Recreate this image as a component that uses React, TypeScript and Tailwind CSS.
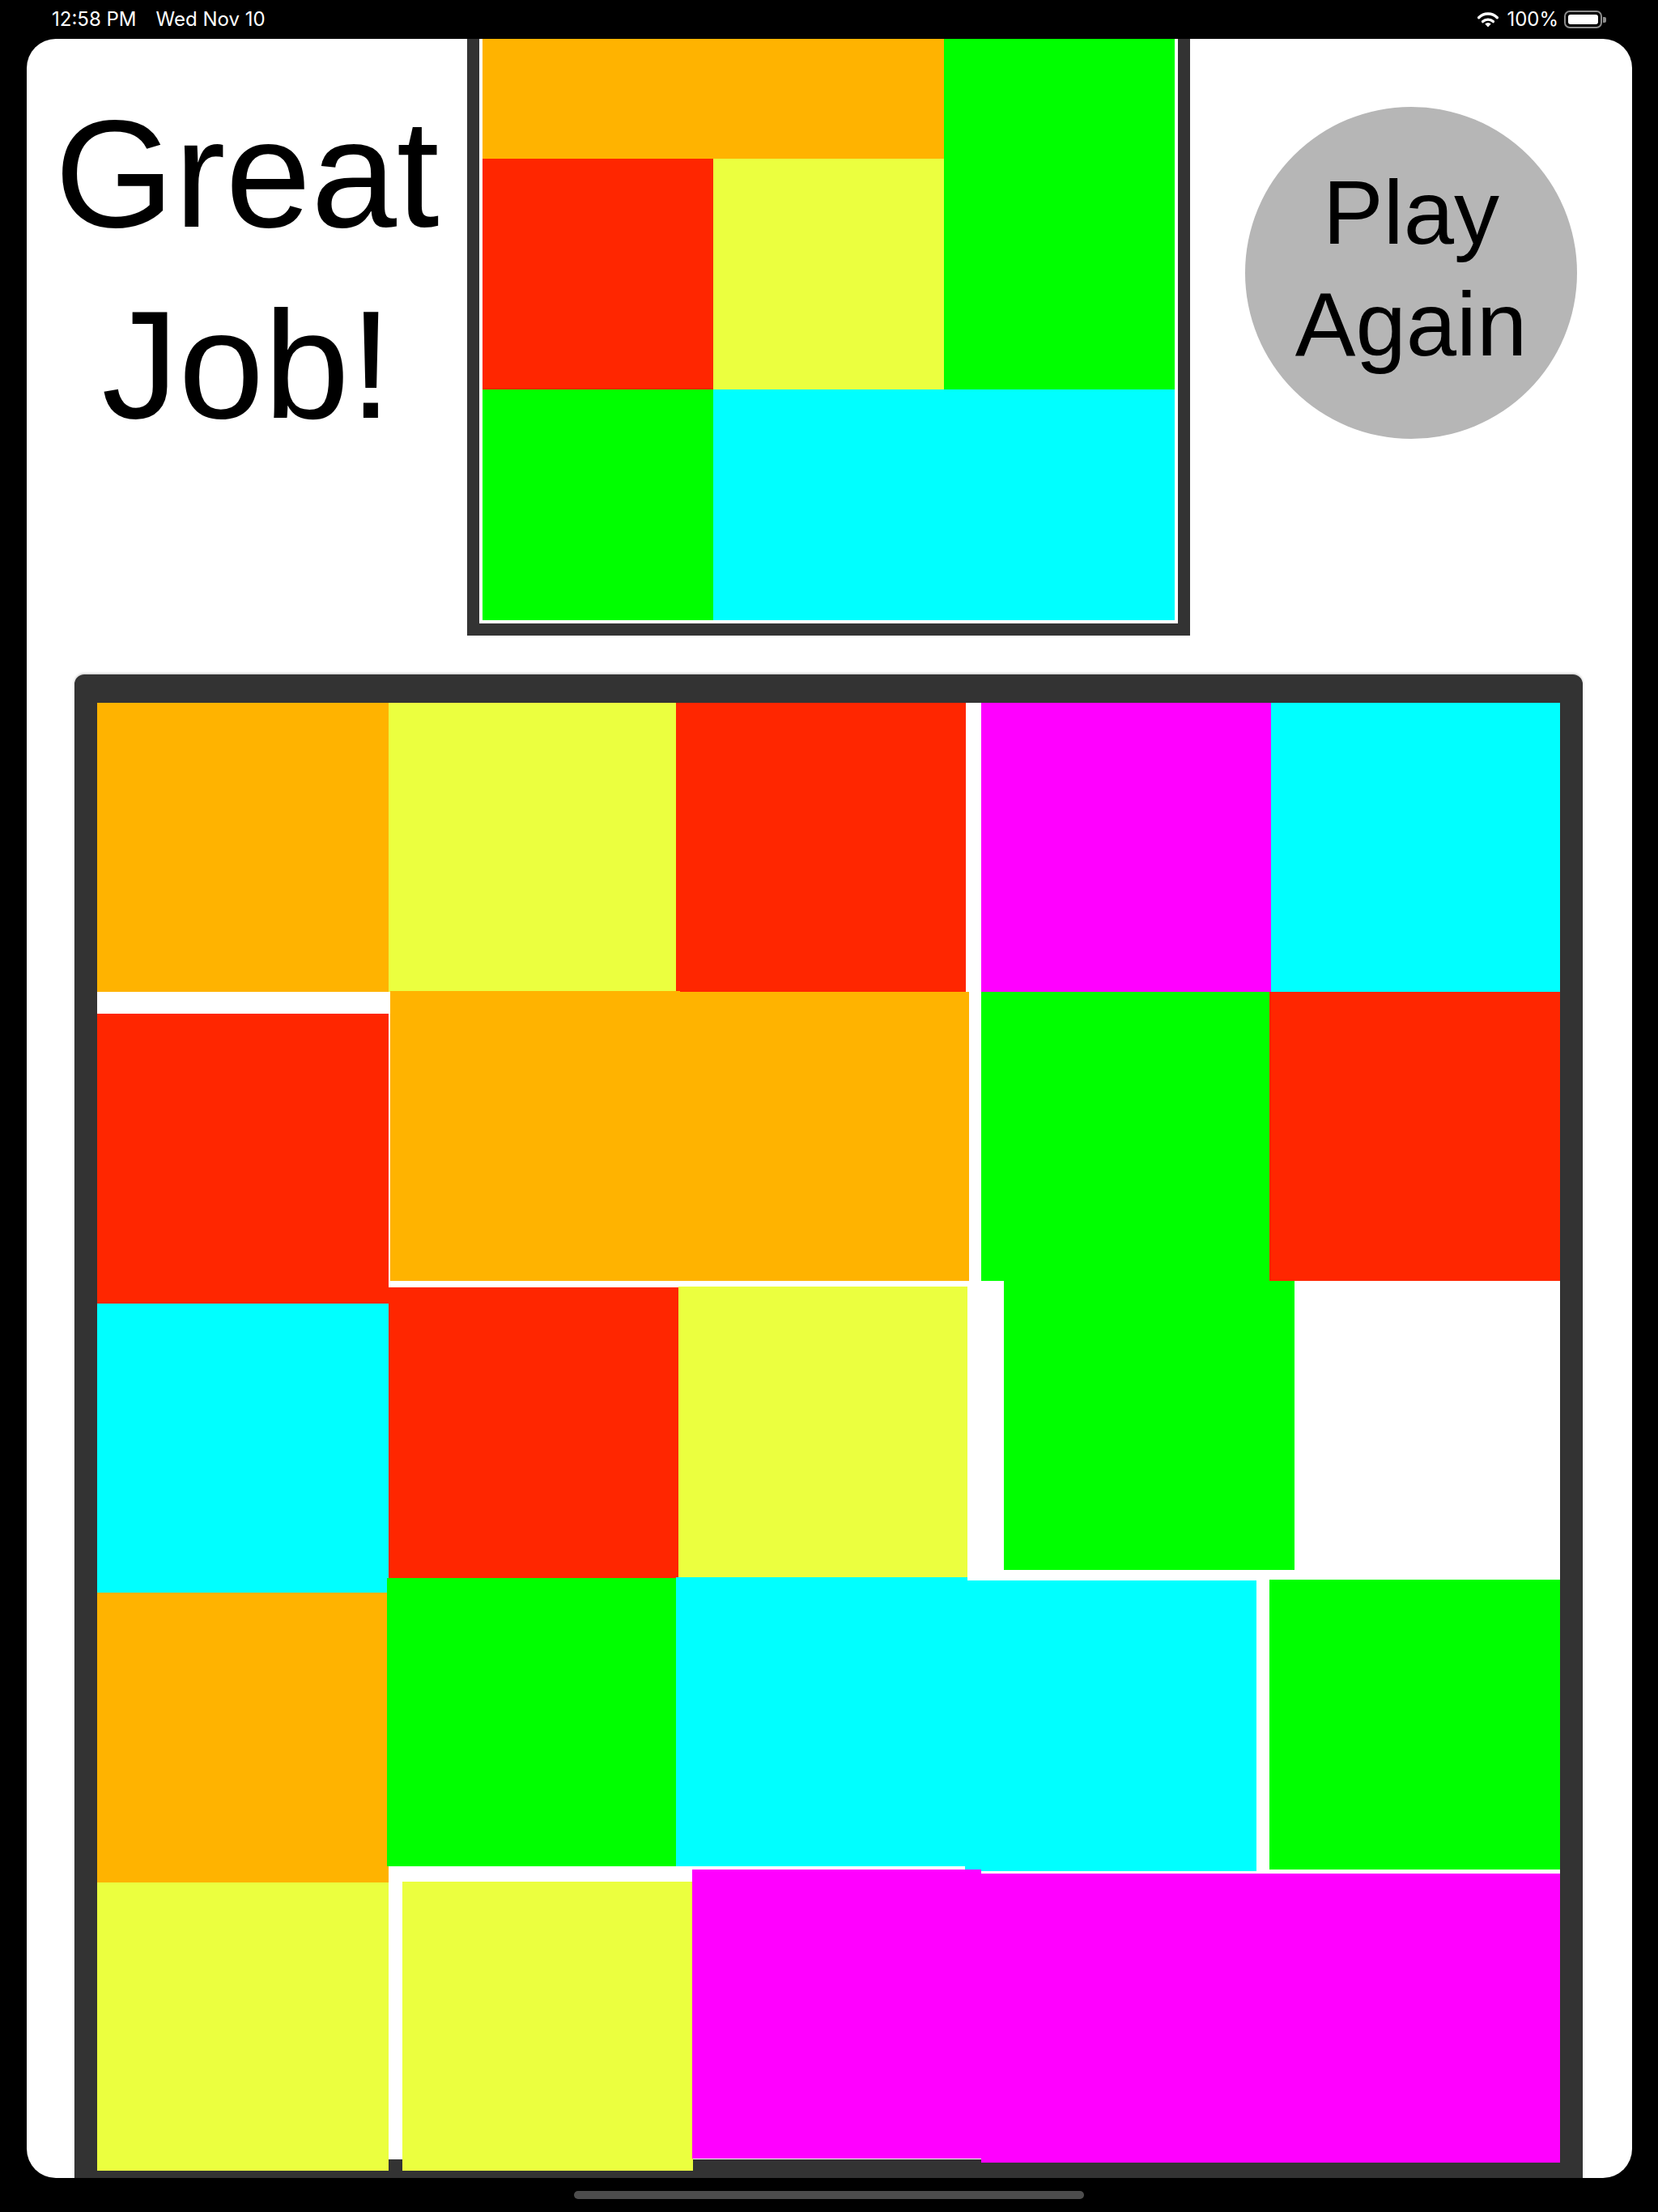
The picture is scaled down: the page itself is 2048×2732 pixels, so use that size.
import React from 'react'

const ORANGE = 'bg-[#ffb300]'
const YELLOW = 'bg-[#ebff3f]'
const RED = 'bg-[#ff2600]'
const GREEN = 'bg-[#00ff00]'
const CYAN = 'bg-[#00ffff]'
const MAGENTA = 'bg-[#ff00ff]'

// target pattern shown in the small board
const goal = [
  [ORANGE, ORANGE, GREEN],
  [RED, YELLOW, GREEN],
  [GREEN, CYAN, CYAN],
]

// tiles on the play board, where they currently sit (px inside the board)
const tiles: { c: string; x: number; y: number; w: number; h: number }[] = [
  { c: ORANGE, x: 0, y: 0, w: 360, h: 357 },
  { c: YELLOW, x: 360, y: 0, w: 356, h: 357 },
  { c: RED, x: 715, y: 0, w: 358, h: 357 },
  { c: MAGENTA, x: 1092, y: 0, w: 358, h: 357 },
  { c: CYAN, x: 1450, y: 0, w: 357, h: 357 },

  { c: RED, x: 0, y: 384, w: 360, h: 358 },
  { c: ORANGE, x: 362, y: 356, w: 358, h: 358 },
  { c: ORANGE, x: 717, y: 357, w: 360, h: 357 },
  { c: GREEN, x: 1092, y: 357, w: 356, h: 357 },
  { c: RED, x: 1448, y: 357, w: 359, h: 357 },

  { c: CYAN, x: 0, y: 742, w: 360, h: 357 },
  { c: RED, x: 360, y: 722, w: 358, h: 359 },
  { c: YELLOW, x: 718, y: 721, w: 357, h: 359 },
  { c: GREEN, x: 1120, y: 714, w: 359, h: 357 },

  { c: ORANGE, x: 0, y: 1099, w: 360, h: 358 },
  { c: GREEN, x: 358, y: 1081, w: 357, h: 356 },
  { c: CYAN, x: 715, y: 1080, w: 360, h: 357 },
  { c: CYAN, x: 1072, y: 1084, w: 360, h: 359 },
  { c: GREEN, x: 1448, y: 1083, w: 359, h: 358 },

  { c: YELLOW, x: 0, y: 1457, w: 360, h: 356 },
  { c: YELLOW, x: 377, y: 1456, w: 359, h: 357 },
  { c: MAGENTA, x: 735, y: 1441, w: 357, h: 357 },
  { c: MAGENTA, x: 1092, y: 1446, w: 358, h: 357 },
  { c: MAGENTA, x: 1450, y: 1446, w: 357, h: 357 },
]

function StatusBar() {
  return (
    <div className="h-[48px] flex items-center justify-between pl-[64px] pr-[64px] text-white font-['Inter',sans-serif] text-[24px]">
      <div className="flex items-center gap-[24px]">
        <span>12:58 PM</span>
        <span>Wed Nov 10</span>
      </div>
      <div className="flex items-center">
        <svg width="26" height="19" viewBox="0 0 26 19" className="mr-[10px]">
          <path
            d="M1.69 6.69 A16 16 0 0 1 24.31 6.69"
            fill="none"
            stroke="white"
            strokeWidth="3.4"
            strokeLinecap="round"
          />
          <path
            d="M6.6 11.6 A9.4 9.4 0 0 1 19.4 11.6"
            fill="none"
            stroke="white"
            strokeWidth="3.4"
            strokeLinecap="round"
          />
          <path d="M13 18.5 L9.3 14.6 A5.2 5.2 0 0 1 16.7 14.6 Z" fill="white" />
        </svg>
        <span>100%</span>
        <div className="ml-[7px] flex items-center">
          <div className="w-[47px] h-[22px] rounded-[7px] border-2 border-[#8c8c8c] p-[3px]">
            <div className="w-full h-full rounded-[3px] bg-white" />
          </div>
          <div className="w-[4px] h-[7px] rounded-r-[2px] bg-[#8c8c8c] ml-[1px]" />
        </div>
      </div>
    </div>
  )
}

export default function App() {
  return (
    <div className="w-[2048px] h-[2732px] bg-black overflow-hidden">
      <StatusBar />

      <div className="ml-[33px] w-[1983px] h-[2642px] bg-white rounded-[36px] overflow-hidden">
        {/* top row */}
        <div className="flex h-[737px]">
          <div className="w-[544px] pt-[48px] flex justify-center">
            <p className="text-center text-black font-['Liberation_Sans',Arial,sans-serif] text-[190px] leading-[236px]">
              Great
              <br />
              Job!
            </p>
          </div>

          <div className="w-[893px] h-[893px] -mt-[156px] border-[15px] border-[#333333] bg-white p-[4px]">
            <div className="grid grid-cols-3 grid-rows-3 w-[855px] h-[855px]">
              {goal.flat().map((c, i) => (
                <div key={i} className={c} />
              ))}
            </div>
          </div>

          <div className="w-[546px] pt-[84px] flex justify-center">
            <button className="w-[410px] h-[410px] rounded-full bg-[#b6b6b6] flex items-center justify-center">
              <span className="text-center text-black font-['Liberation_Sans',Arial,sans-serif] text-[112px] leading-[138px] -mt-[10px]">
                Play
                <br />
                Again
              </span>
            </button>
          </div>
        </div>

        {/* play board */}
        <div className="ml-[59px] mt-[48px] w-[1863px] border-x-[28px] border-t-[35px] border-b-[28px] border-[#333333] rounded-t-[12px] shadow-[0_-1px_3px_rgba(0,0,0,0.25)]">
          <div className="relative w-[1807px] h-[1799px] bg-white">
            {tiles.map((t, i) => (
              <div
                key={i}
                className={`absolute ${t.c}`}
                style={{ left: t.x, top: t.y, width: t.w, height: t.h }}
              />
            ))}
          </div>
        </div>
      </div>

      <div className="h-[42px] flex justify-center pt-[16px]">
        <div className="w-[630px] h-[10px] rounded-full bg-[#4d4d4d]" />
      </div>
    </div>
  )
}
